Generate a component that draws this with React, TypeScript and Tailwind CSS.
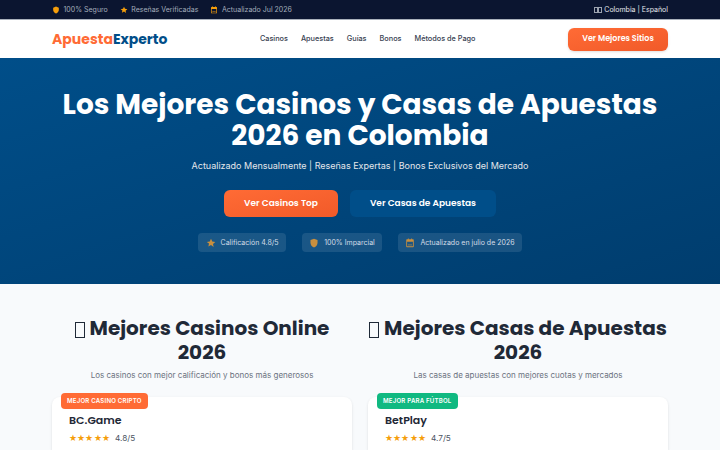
import React from 'react';

const inter = { fontFamily: 'Inter, sans-serif' };
const poppins = { fontFamily: 'Poppins, Inter, sans-serif' };

const Shield = ({ className }: { className: string }) => (
  <svg viewBox="0 0 24 24" className={className} fill="currentColor">
    <path d="M12 1.5 3.5 5v6.2c0 5.3 3.6 9.8 8.5 11.3 4.9-1.5 8.5-6 8.5-11.3V5L12 1.5z" />
  </svg>
);

const Star = ({ className }: { className: string }) => (
  <svg viewBox="0 0 24 24" className={className} fill="currentColor">
    <path d="m12 2 3 6.600 7.200.8-5.400 4.800 1.500 7.100L12 16.700l-6.300 3.600 1.500-7.100L1.800 9.400 9 8.600 12 2z" />
  </svg>
);

const Calendar = ({ className }: { className: string }) => (
  <svg viewBox="0 0 24 24" className={className} fill="currentColor">
    <path fillRule="evenodd" d="M7 1h2v2h6V1h2v2h2.500A1.500 1.500 0 0 1 21 4.500v16a1.500 1.500 0 0 1-1.500 1.500h-15A1.500 1.500 0 0 1 3 20.500v-16A1.500 1.500 0 0 1 4.500 3H7V1zM5 9v11h14V9H5z" />
    <path d="M7 15h10v3H7z" opacity="0.5" />
  </svg>
);

const TopBar = () => (
  <div className="h-5 bg-[#0b1530] border-b border-[#a9b0bb] flex items-center justify-between px-[52px] text-[7px] leading-none" style={inter}>
    <div className="flex items-center gap-[12px] text-[#a3adbb]">
      <span className="flex items-center gap-[3.5px]"><Shield className="w-[8px] h-[8px] text-[#f59e0b]" />100% Seguro</span>
      <span className="flex items-center gap-[3.5px]"><Star className="w-[8px] h-[8px] text-[#f59e0b]" />Reseñas Verificadas</span>
      <span className="flex items-center gap-[3.5px]"><Calendar className="w-[8px] h-[8px] text-[#f59e0b]" />Actualizado Jul 2026</span>
    </div>
    <span className="flex items-center text-[#e5e7eb]">
      {/* the flag emoji has no font in the reference: two empty boxes */}
      <span className="w-[4px] h-[6px] border-[0.5px] border-[#9ca3af]" />
      <span className="w-[4px] h-[6px] border-[0.5px] border-[#9ca3af] mr-[2px]" />
      Colombia | Español
    </span>
  </div>
);

const Header = () => (
  <header className="h-[38px] bg-white flex items-center justify-between px-[52px]">
    <div className="text-[14px] font-bold" style={poppins}>
      <span className="text-[#ff6b35]">Apuesta</span><span className="text-[#004e89]">Experto</span>
    </div>
    <nav className="flex items-center gap-[13px] pt-[1px] text-[7.3px] font-medium text-[#374151]" style={inter}>
      <a>Casinos</a>
      <a>Apuestas</a>
      <a>Guías</a>
      <a>Bonos</a>
      <a>Métodos de Pago</a>
    </nav>
    <button className="w-[100px] h-[23px] rounded-[6px] bg-gradient-to-br from-[#ff6b35] to-[#f15a29] text-white text-[8px] font-semibold shadow-sm" style={poppins}>
      Ver Mejores Sitios
    </button>
  </header>
);

const HeroBadge = ({ icon, label, w }: { icon: React.ReactNode; label: string; w: string }) => (
  <div className={`h-[19px] pt-[1px] rounded-[4px] bg-white/10 flex items-center justify-center gap-[5px] text-[7px] text-[#d4dde8] ${w}`} style={inter}>
    {icon}
    {label}
  </div>
);

const Hero = () => (
  <section className="h-[226px] bg-gradient-to-br from-[#004e89] to-[#003d6e] flex flex-col items-center pt-[31px]">
    <h1 className="text-[28px] leading-[31px] font-bold text-white text-center" style={poppins}>
      Los Mejores Casinos y Casas de Apuestas
      <br />
      2026 en Colombia
    </h1>
    <p className="mt-[8px] text-[9px] leading-[14px] text-[#e5e7eb]" style={inter}>
      Actualizado Mensualmente | Reseñas Expertas | Bonos Exclusivos del Mercado
    </p>
    <div className="mt-[17px] flex gap-[12px]" style={poppins}>
      <button className="w-[114px] h-[27px] pt-[1px] rounded-[6px] bg-gradient-to-br from-[#ff6b35] to-[#f15a29] text-white text-[9px] font-semibold">Ver Casinos Top</button>
      <button className="w-[146px] h-[27px] pt-[1px] rounded-[6px] bg-[#004e89] text-white text-[9px] font-semibold">Ver Casas de Apuestas</button>
    </div>
    <div className="mt-[16px] flex gap-[16px]">
      <HeroBadge w="w-[88px]" icon={<Star className="w-[10px] h-[10px] text-[#c98f3e]" />} label="Calificación 4.8/5" />
      <HeroBadge w="w-[80px]" icon={<Shield className="w-[10px] h-[10px] text-[#c98f3e]" />} label="100% Imparcial" />
      <HeroBadge w="w-[124px]" icon={<Calendar className="w-[10px] h-[10px] text-[#c98f3e]" />} label="Actualizado en julio de 2026" />
    </div>
  </section>
);

const Column = ({ title, subtitle, badge, badgeColor, name, rating }: { title: string; subtitle: string; badge: string; badgeColor: string; name: string; rating: string }) => (
  <div className="flex-1 min-w-0">
    <h2 className="text-[20px] leading-[24px] font-bold text-[#1f2937] text-center whitespace-nowrap" style={poppins}>
      {/* the heading's emoji has no font in the reference: an empty box */}
      <span className="inline-block align-[-3px] w-[10px] h-[16px] border-[1.5px] border-[#1f2937] mr-[5px]" />
      {title}
      <br />
      2026
    </h2>
    <p className="mt-[4px] text-[8px] leading-[14px] text-[#6b7280] text-center" style={inter}>{subtitle}</p>
    <div className="relative mt-[15px] bg-white rounded-[8px] shadow-sm h-[60px] pt-[14px] px-[17px]">
      <span className={`absolute -top-[4px] left-[9px] h-[16px] px-[6px] rounded-[4px] text-white text-[6.1px] font-semibold tracking-[0.2px] flex items-center ${badgeColor}`} style={inter}>{badge}</span>
      <div className="text-[11px] font-semibold text-[#1f2937] leading-[18px]" style={poppins}>{name}</div>
      <div className="mt-[2px] flex items-center gap-[5px]">
        <span className="text-[#f59e0b] text-[9px] tracking-[0.2px]">★★★★★</span>
        <span className="text-[8.2px] text-[#4b5563]" style={inter}>{rating}</span>
      </div>
    </div>
  </div>
);

export default function App() {
  return (
    <div className="h-[450px] overflow-hidden bg-[#f8fafc]">
      <TopBar />
      <Header />
      <Hero />
      <section className="flex gap-[16px] px-[52px] pt-[32px]">
        <Column title="Mejores Casinos Online" subtitle="Los casinos con mejor calificación y bonos más generosos" badge="MEJOR CASINO CRIPTO" badgeColor="bg-[#ff6b35]" name="BC.Game" rating="4.8/5" />
        <Column title="Mejores Casas de Apuestas" subtitle="Las casas de apuestas con mejores cuotas y mercados" badge="MEJOR PARA FÚTBOL" badgeColor="bg-[#10b981]" name="BetPlay" rating="4.7/5" />
      </section>
    </div>
  );
}
